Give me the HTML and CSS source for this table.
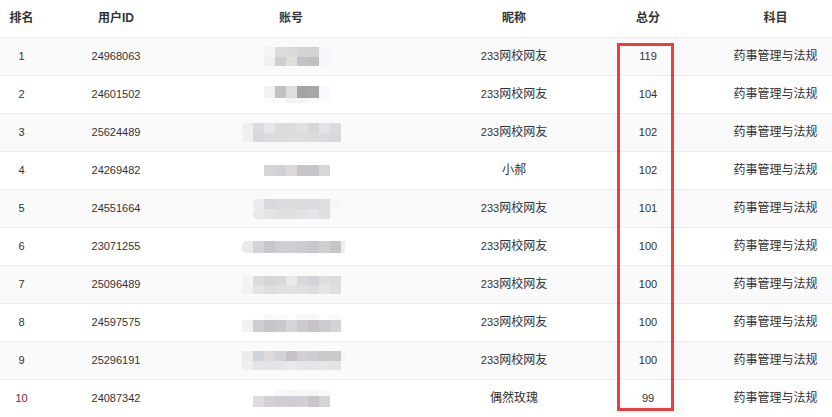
FILE: index.html
```html
<!DOCTYPE html>
<html lang="zh-CN">
<head>
<meta charset="utf-8">
<title>排行榜</title>
<link rel="stylesheet" href="styles.css">
</head>
<body>
<div class="board">
  <div class="row head">
    <div class="c rank">排名</div>
    <div class="c uid">用户ID</div>
    <div class="c acct-h">账号</div>
    <div class="c nick">昵称</div>
    <div class="c score">总分</div>
    <div class="c subj">科目</div>
  </div>

  <div class="row alt">
    <div class="c rank num">1</div>
    <div class="c uid num">24968063</div>
    <div class="c acct"><div class="mosaic" style="margin-left:75px">
      <div class="ml" style="height:10px;width:66px;background:linear-gradient(to right,#f4f4f4 0 11px,#dcdcdf 11px 22px,#d9dbdb 22px 33px,#d4d3d6 33px 44px,#d3d2d4 44px 55px,#f6f7fa 55px 66px)"></div>
      <div class="ml" style="height:9px;width:66px;background:linear-gradient(to right,#f0f0f0 0 11px,#cfcfd2 11px 22px,#dfdedb 22px 33px,#c3c2c7 33px 44px,#c2bfc0 44px 55px,#f6f7fa 55px 66px)"></div>
    </div></div>
    <div class="c nick"><span class="num">233</span>网校网友</div>
    <div class="c score num">119</div>
    <div class="c subj">药事管理与法规</div>
  </div>

  <div class="row">
    <div class="c rank num">2</div>
    <div class="c uid num">24601502</div>
    <div class="c acct"><div class="mosaic" style="margin-left:75px">
      <div class="ml" style="height:12px;width:66px;background:linear-gradient(to right,#f2f2ee 0 11px,#c2c2c4 11px 22px,#dedede 22px 33px,#a5a4a4 33px 44px,#a9a7a6 44px 55px,#f8f9fd 55px 66px)"></div>
      <div class="ml" style="height:5px;width:66px;background:linear-gradient(to right,#fafafa 0 11px,#fbfbfb 11px 22px,#f3f3f3 22px 33px,#f4f4f4 33px 44px,#f7f7f7 44px 55px,#fdfdfd 55px 66px)"></div>
    </div></div>
    <div class="c nick"><span class="num">233</span>网校网友</div>
    <div class="c score num">104</div>
    <div class="c subj">药事管理与法规</div>
  </div>

  <div class="row alt">
    <div class="c rank num">3</div>
    <div class="c uid num">25624489</div>
    <div class="c acct"><div class="mosaic" style="margin-left:53px">
      <div class="ml round" style="height:10px;width:99px;background:linear-gradient(to right,#f0f0f0 0 11px,#dcdce0 11px 22px,#e6e6e8 22px 33px,#dbdadd 33px 44px,#dcdcde 44px 55px,#e2e0de 55px 66px,#d9d6db 66px 77px,#e4e3e7 77px 88px,#dcdbe0 88px 99px)"></div>
      <div class="ml" style="height:9px;width:99px;background:linear-gradient(to right,#f0f0f0 0 11px,#d9d9dd 11px 22px,#dcdcdf 22px 33px,#dcdcdf 33px 44px,#dddde0 44px 55px,#dddcdf 55px 66px,#dcdadd 66px 77px,#dddbde 77px 88px,#d9d8dd 88px 99px)"></div>
    </div></div>
    <div class="c nick"><span class="num">233</span>网校网友</div>
    <div class="c score num">102</div>
    <div class="c subj">药事管理与法规</div>
  </div>

  <div class="row">
    <div class="c rank num">4</div>
    <div class="c uid num">24269482</div>
    <div class="c acct"><div class="mosaic" style="margin-left:75px">
      <div class="ml" style="height:11px;width:66px;background:linear-gradient(to right,#d6d4d4 0 11px,#d0d2d6 11px 22px,#dcdad9 22px 33px,#c8c4c4 33px 44px,#c5c6ca 44px 55px,#d8d6d9 55px 66px)"></div>
    </div></div>
    <div class="c nick">小郝</div>
    <div class="c score num">102</div>
    <div class="c subj">药事管理与法规</div>
  </div>

  <div class="row alt">
    <div class="c rank num">5</div>
    <div class="c uid num">24551664</div>
    <div class="c acct"><div class="mosaic" style="margin-left:64px">
      <div class="ml round" style="height:10px;width:88px;background:linear-gradient(to right,#ececee 0 11px,#d9d9dd 11px 22px,#dcdcdf 22px 33px,#dcdbdb 33px 44px,#dadce0 44px 55px,#dcdcdf 55px 66px,#dedede 66px 77px,#f4f6f9 77px 88px)"></div>
      <div class="ml round" style="height:10px;width:77px;background:linear-gradient(to right,#e9e9eb 0 11px,#e4e3e6 11px 22px,#e0dfe2 22px 33px,#e0e0e3 33px 44px,#e3e2e5 44px 55px,#e4e5e8 55px 66px,#dfdfe2 66px 77px)"></div>
    </div></div>
    <div class="c nick"><span class="num">233</span>网校网友</div>
    <div class="c score num">101</div>
    <div class="c subj">药事管理与法规</div>
  </div>

  <div class="row">
    <div class="c rank num">6</div>
    <div class="c uid num">23071255</div>
    <div class="c acct"><div class="mosaic" style="margin-left:53px">
      <div class="ml round" style="height:12px;width:103px;background:linear-gradient(to right,#ebeaeb 0 11px,#d5d3d6 11px 22px,#c8c5cb 22px 33px,#cfcdd2 33px 44px,#d0ced2 44px 55px,#cdcbcf 55px 66px,#c9c7cb 66px 77px,#d1cfd3 77px 88px,#c7c4c6 88px 99px,#eeeeee 99px 103px)"></div>
    </div></div>
    <div class="c nick"><span class="num">233</span>网校网友</div>
    <div class="c score num">100</div>
    <div class="c subj">药事管理与法规</div>
  </div>

  <div class="row alt">
    <div class="c rank num">7</div>
    <div class="c uid num">25096489</div>
    <div class="c acct"><div class="mosaic" style="margin-left:53px">
      <div class="ml" style="height:9px;width:99px;background:linear-gradient(to right,#f4f2f2 0 11px,#dcdcde 11px 22px,#d7d5d9 22px 33px,#d9d7da 33px 44px,#e9e9ea 44px 55px,#dad8dc 55px 66px,#d6d3d8 66px 77px,#dedde0 77px 88px,#dcdce0 88px 99px)"></div>
      <div class="ml" style="height:9px;width:99px;background:linear-gradient(to right,#f3f2f3 0 11px,#e3e3e5 11px 22px,#dddcdf 22px 33px,#e0dfe2 33px 44px,#e2e2e3 44px 55px,#e0dfe2 55px 66px,#dedcdf 66px 77px,#e5e4e6 77px 88px,#dfdfe2 88px 99px)"></div>
    </div></div>
    <div class="c nick"><span class="num">233</span>网校网友</div>
    <div class="c score num">100</div>
    <div class="c subj">药事管理与法规</div>
  </div>

  <div class="row">
    <div class="c rank num">8</div>
    <div class="c uid num">24597575</div>
    <div class="c acct"><div class="mosaic" style="margin-left:53px">
      <div class="ml" style="height:6px;width:88px;margin-left:11px;background:linear-gradient(to right,#fdfdfd 0 11px,#f9f9fa 11px 22px,#fafafa 22px 33px,#fdfdfd 33px 44px,#f8f8f9 44px 55px,#f7f7f8 55px 66px,#fdfdfd 66px 77px,#fafafa 77px 88px)"></div>
      <div class="ml" style="height:12px;width:99px;background:linear-gradient(to right,#f2f0f0 0 11px,#cecdd1 11px 22px,#c8c5ca 22px 33px,#cbc9cd 33px 44px,#d6d5d9 44px 55px,#cccacf 55px 66px,#c6c2c7 66px 77px,#cecbcf 77px 88px,#d3d2d6 88px 99px)"></div>
    </div></div>
    <div class="c nick"><span class="num">233</span>网校网友</div>
    <div class="c score num">100</div>
    <div class="c subj">药事管理与法规</div>
  </div>

  <div class="row alt">
    <div class="c rank num">9</div>
    <div class="c uid num">25296191</div>
    <div class="c acct"><div class="mosaic" style="margin-left:53px">
      <div class="ml" style="height:10px;width:103px;background:linear-gradient(to right,#ecebe9 0 11px,#d1d3d8 11px 22px,#dedadc 22px 33px,#d3d2d6 33px 44px,#c5c1c6 44px 55px,#d0d0d4 55px 66px,#cfcdd1 66px 77px,#cbc9c8 77px 88px,#cbcacd 88px 99px,#f4f5f8 99px 103px)"></div>
      <div class="ml" style="height:9px;width:99px;background:linear-gradient(to right,#efefef 0 11px,#e4e4e6 11px 22px,#e4e3e6 22px 33px,#e6e5e8 33px 44px,#eaeaec 44px 55px,#e6e6e9 55px 66px,#e5e5e7 66px 77px,#e6e6e8 77px 88px,#e4e4e6 88px 99px)"></div>
    </div></div>
    <div class="c nick"><span class="num">233</span>网校网友</div>
    <div class="c score num">100</div>
    <div class="c subj">药事管理与法规</div>
  </div>

  <div class="row last">
    <div class="c rank num">10</div>
    <div class="c uid num">24087342</div>
    <div class="c acct"><div class="mosaic" style="margin-left:64px">
      <div class="ml" style="height:6px;width:55px;margin-left:22px;background:linear-gradient(to right,#f8f8f8 0 11px,#f6f6f7 11px 22px,#f7f7f8 22px 33px,#f6f6f6 33px 44px,#f9f9f9 44px 55px)"></div>
      <div class="ml" style="height:11px;width:77px;background:linear-gradient(to right,#dedcdf 0 11px,#d3d1d5 11px 22px,#d1ced1 22px 33px,#cfccd3 33px 44px,#d2cfd5 44px 55px,#c9c6c9 55px 66px,#d5d4d6 66px 77px)"></div>
    </div></div>
    <div class="c nick">偶然玫瑰</div>
    <div class="c score num">99</div>
    <div class="c subj">药事管理与法规</div>
  </div>

  <div class="mark"></div>
</div>
</body>
</html>
```

FILE: styles.css
```css
html, body {
  margin: 0;
  padding: 0;
  background: #ffffff;
}

body {
  font-family: "Liberation Sans", "Noto Sans CJK SC", sans-serif;
  font-size: 12px;
  color: #333333;
}

.board {
  position: relative;
  width: 832px;
}

.row {
  display: grid;
  grid-template-columns: 43px 146px 204px 207px 96px 136px;
  height: 37px;
  border-bottom: 1px solid #ececec;
  align-items: center;
}

.row.alt {
  background: #fafafa;
}

.row.last {
  border-bottom: none;
}

.c {
  text-align: center;
  white-space: nowrap;
  line-height: 37px;
}

.head .c {
  font-weight: bold;
  color: #333333;
}

.num {
  font-size: 11px;
}

.nick {
  padding-left: 35px;
}

.subj {
  padding-left: 23px;
}

.acct {
  display: flex;
  align-items: center;
  height: 37px;
  line-height: normal;
}

.mosaic {
  display: flex;
  flex-direction: column;
}

.ml {
  flex: none;
}

.ml.round {
  border-radius: 4px 0 0 4px;
}

.row.last .rank {
  color: #7a2440;
}

.mark {
  position: absolute;
  left: 617px;
  top: 43px;
  width: 51px;
  height: 362px;
  border: 3px solid #f23b3b;
}
```
